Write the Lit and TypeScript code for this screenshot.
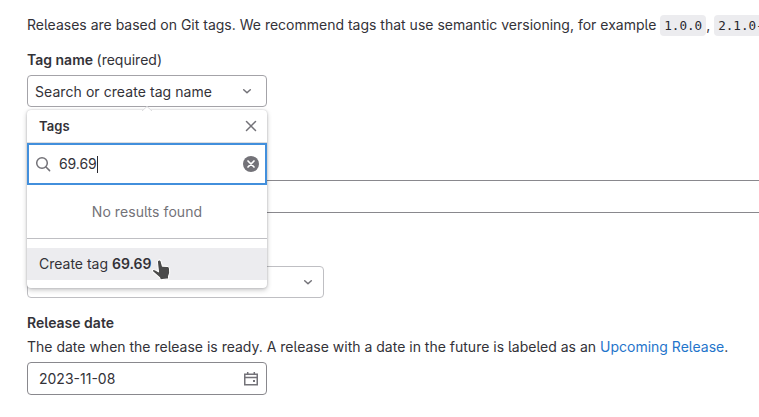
import { LitElement, html, css } from "lit";
import { customElement, property } from "lit/decorators.js";

const chevron = html`<svg class="icon" viewBox="0 0 16 16" width="16" height="16">
  <path d="M4.7 6.7 8 9.8l3.3-3.1" fill="none" stroke="#737278" stroke-width="1.5" stroke-linecap="round" stroke-linejoin="round"/></svg>`;

@customElement("tag-dropdown")
export class TagDropdown extends LitElement {
  @property() query = "69.69";

  static styles = css`
    :host { display: block; position: absolute; left: 0; top: 35px; width: 240px; z-index: 2; }
    .panel { position: relative; height: 178px; border-radius: 4px; background: #fff; box-shadow: 0 0 2px rgba(31,30,36,.24), 0 2px 5px rgba(31,30,36,.26); display: flex; flex-direction: column; }
    .arrow { position: absolute; left: 115px; top: -4px; width: 10px; height: 5px; }
    .head { height: 32px; display: flex; align-items: center; justify-content: space-between; padding: 0 8px 0 12px; border-bottom: 1px solid #dcdcde; }
    .title { font-size: 13px; font-weight: 600; letter-spacing: .12px; }
    .search { height: 38px; border: 2px solid #428fdc; display: flex; align-items: center; padding: 0 6px; border-bottom-width: 2px; }
    .query { margin-left: 8px; font-size: 14px; letter-spacing: -.1px; }
    .caret { width: 1px; height: 17px; background: #28272d; margin-right: auto; }
    .empty { height: 53px; display: flex; align-items: center; justify-content: center; color: #737278; border-bottom: 1px solid #bfbfc3; letter-spacing: .07px; }
    .create { margin-top: 9px; height: 32px; background: #ececef; display: flex; align-items: center; padding-left: 12px; white-space: pre; }
    .create b { font-weight: 600; }
    .cursor { position: absolute; left: 124px; top: 148px; }
    svg { display: block; }
  `;

  render() {
    return html`<div class="panel">
      <svg class="arrow" viewBox="0 0 10 5"><path d="M0 5 5 .5 10 5" fill="#fff" stroke="#dcdcde" stroke-width="1"/></svg>
      <div class="head"><span class="title">Tags</span>
        <svg viewBox="0 0 16 16" width="16" height="16"><path d="m3.5 3.5 9 9m0-9-9 9" stroke="#737278" stroke-width="1.5" stroke-linecap="round"/></svg>
      </div>
      <div class="search">
        <svg viewBox="0 0 16 16" width="16" height="16"><g fill="none" stroke="#737278" stroke-width="1.5" stroke-linecap="round"><circle cx="7" cy="7" r="5.3"/><path d="m11 11 3.6 3.6"/></g></svg>
        <span class="query">${this.query}</span><span class="caret"></span>
        <svg viewBox="0 0 16 16" width="16" height="16"><circle cx="8" cy="8" r="8" fill="#737278"/><path d="m5 5 6 6m0-6-6 6" stroke="#fff" stroke-width="1.7" stroke-linecap="round"/></svg>
      </div>
      <div class="empty">No results found</div>
      <div class="create">Create tag <b>${this.query}</b></div>
      <svg class="cursor" viewBox="0 0 22 24" width="22" height="24"><path d="M7.4 2.2c1.3-.7 2.4 0 2.8 1.3l1.2 4.6 5.3.4c1.2.1 1.8.8 1.8 2l.2 4.5-1.2 3.4.2 2.4-8.2 1.1-.9-2.2-6-5.2c-1-.8-1.6-2-.7-2.7.8-.6 1.7-.2 2.5.3l3.1 1.7L6.4 4c-.2-.8.2-1.5 1-1.8Z" fill="#4a4a4a" stroke="#fff" stroke-width="1.1" stroke-linejoin="round"/></svg>
    </div>`;
  }
}

@customElement("app-root")
export class AppRoot extends LitElement {
  static styles = css`
    :host { display: block; width: 759px; height: 417px; overflow: hidden; background: #fff; color: #333238; font: 14px/20px Inter, "Noto Sans", sans-serif; font-feature-settings: "cv05"; }
    .form { padding: 15px 0 0 27px; display: flex; flex-direction: column; }
    p { margin: 0; white-space: nowrap; }
    code { display: inline-block; font: 12.6px/21px "DejaVu Sans Mono", monospace; background: #ececef; border-radius: 4px; padding: 0 4px; color: #28272d; }
    .label { font-weight: 600; }
    .label span { font-weight: 400; }
    .tag-label { margin-top: 14px; }
    .anchor { position: relative; margin-top: 5px; }
    .select { box-sizing: border-box; width: 240px; height: 32px; border: 1px solid #a4a3a8; border-radius: 4px; display: flex; align-items: center; justify-content: space-between; padding: 0 11px 0 7px; }
    .select .value { height: 17px; line-height: 17px; overflow: hidden; letter-spacing: .07px; }
    .input { box-sizing: border-box; height: 33px; margin-top: 73px; border: 1px solid #89888d; border-radius: 4px; margin-right: -8px; }
    .source { width: 297px; margin-top: 53px; border-color: #bfbfc3; justify-content: flex-end; padding-right: 7px; }
    .date-label { margin-top: 15px; }
    .hint { margin-top: 4px; }
    a { color: #1f75cb; text-decoration: none; }
    .date { box-sizing: border-box; width: 240px; height: 33px; margin-top: 5px; border: 1px solid #89888d; border-radius: 4px; display: flex; align-items: center; justify-content: space-between; padding: 0 7px 0 11px; }
    svg { display: block; }
  `;

  render() {
    return html`<div class="form">
      <p class="intro">Releases are based on Git tags. We recommend tags that use semantic versioning, for example <code>1.0.0</code>, <code>2.1.0-pre</code></p>
      <div class="label tag-label">Tag name <span>(required)</span></div>
      <div class="anchor">
        <div class="select"><span class="value">Search or create tag name</span>${chevron}</div>
        <tag-dropdown></tag-dropdown>
      </div>
      <div class="input"></div>
      <div class="select source">${chevron}</div>
      <div class="label date-label">Release date</div>
      <p class="hint">The date when the release is ready. A release with a date in the future is labeled as an <a>Upcoming Release</a>.</p>
      <div class="date"><span>2023-11-08</span>
        <svg viewBox="0 0 16 16" width="16" height="16"><path d="M1.75 3.25h12.5v10.5H1.75zM1.75 6.4h12.5M4.7 1v2M11.3 1v2" fill="none" stroke="#737278" stroke-width="1.5"/><path d="M10 9h2v2h-2z" fill="#737278"/></svg>
      </div>
    </div>`;
  }
}
